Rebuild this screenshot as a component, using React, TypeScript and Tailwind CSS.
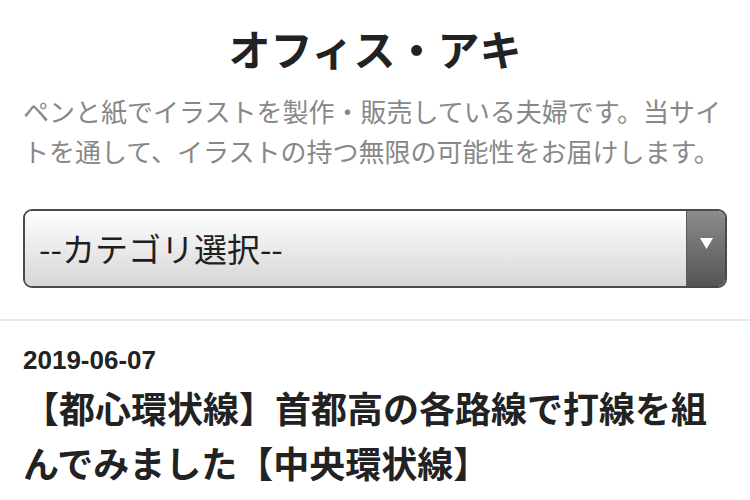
const jp = "font-['Hiragino_Sans','Noto_Sans_CJK_JP',sans-serif]"

function CategorySelect() {
  return (
    <div className="mx-[23px] flex h-[79px] overflow-hidden rounded-[9px] border-2 border-[#4a4a4a]">
      <div className="flex flex-1 items-center bg-gradient-to-b from-white to-[#d6d6d6] pl-[14px]">
        <span className={`${jp} text-[33px] leading-none text-[#1e1e1e]`}>--カテゴリ選択--</span>
      </div>
      <div className="flex w-[39px] items-start justify-center border-l border-[#5a5a5a] bg-gradient-to-b from-[#8c8c8c] to-[#555555] pt-[27px]">
        <svg width="13" height="11" viewBox="0 0 13 11">
          <path d="M0 0 H13 L6.5 11 Z" fill="#fff" />
        </svg>
      </div>
    </div>
  )
}

export default function App() {
  return (
    <div className="h-[500px] w-[750px] overflow-hidden bg-white">
      <header className="pt-[24px]">
        <h1 className={`${jp} text-center text-[42px] font-bold leading-[48px] text-[#222]`}>オフィス・アキ</h1>
        <p className={`${jp} mt-[19px] px-[23px] text-[26px] leading-[40px] text-[#888]`}>
          ペンと紙でイラストを製作・販売している夫婦です。当サイトを通して、イラストの持つ無限の可能性をお届けします。
        </p>
      </header>

      <div className="mt-[38px]">
        <CategorySelect />
      </div>

      <div className="mt-[31px] border-t-2 border-[#e4e9ec]" />

      <article className="px-[23px] pt-[25px]">
        <p className="font-['Liberation_Sans',Arial,sans-serif] text-[26px] font-bold leading-[28px] text-[#222]">
          2019-06-07
        </p>
        <h2 className={`${jp} mt-[6px] text-[36px] font-bold leading-[55px] text-[#222]`}>
          【都心環状線】首都高の各路線で打線を組んでみました【中央環状線】
        </h2>
      </article>
    </div>
  )
}
